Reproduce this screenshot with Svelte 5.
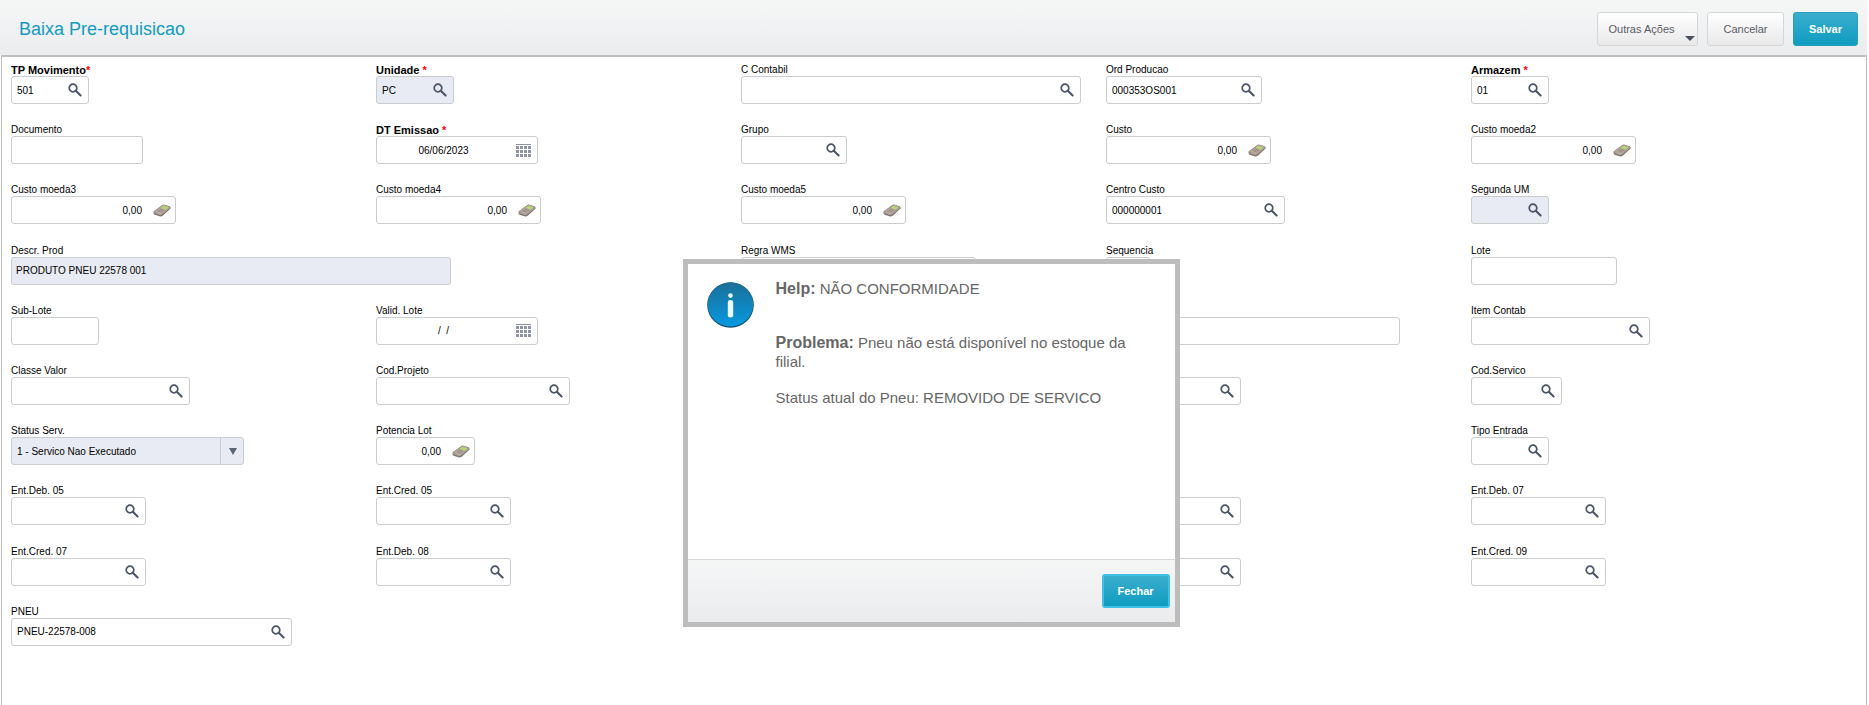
<script>
  // width is the box width in px, col/row are 1-based grid positions
  const fields = [
    { id: 'tp', label: 'TP Movimento', required: true, tight: true, row: 1, col: 1, width: 78, value: '501', icon: 'search' },
    { id: 'unidade', label: 'Unidade', required: true, row: 1, col: 2, width: 78, value: 'PC', icon: 'search', readonly: true },
    { id: 'ccontabil', label: 'C Contabil', row: 1, col: 3, width: 340, icon: 'search' },
    { id: 'op', label: 'Ord Producao', row: 1, col: 4, width: 156, value: '000353OS001', icon: 'search' },
    { id: 'armazem', label: 'Armazem', required: true, row: 1, col: 5, width: 78, value: '01', icon: 'search' },

    { id: 'documento', label: 'Documento', row: 2, col: 1, width: 132 },
    { id: 'emissao', label: 'DT Emissao', required: true, row: 2, col: 2, width: 162, value: '06/06/2023', icon: 'calendar' },
    { id: 'grupo', label: 'Grupo', row: 2, col: 3, width: 106, icon: 'search' },
    { id: 'custo', label: 'Custo', row: 2, col: 4, width: 165, value: '0,00', icon: 'calc' },
    { id: 'custo2', label: 'Custo moeda2', row: 2, col: 5, width: 165, value: '0,00', icon: 'calc' },

    { id: 'custo3', label: 'Custo moeda3', row: 3, col: 1, width: 165, value: '0,00', icon: 'calc' },
    { id: 'custo4', label: 'Custo moeda4', row: 3, col: 2, width: 165, value: '0,00', icon: 'calc' },
    { id: 'custo5', label: 'Custo moeda5', row: 3, col: 3, width: 165, value: '0,00', icon: 'calc' },
    { id: 'cc', label: 'Centro Custo', row: 3, col: 4, width: 179, value: '000000001', icon: 'search' },
    { id: 'segum', label: 'Segunda UM', row: 3, col: 5, width: 78, icon: 'search', readonly: true },

    { id: 'descr', label: 'Descr. Prod', row: 4, col: 1, width: 440, value: 'PRODUTO PNEU 22578 001', readonly: true },
    { id: 'wms', label: 'Regra WMS', row: 4, col: 3, width: 235 },
    { id: 'sequencia', label: 'Sequencia', row: 4, col: 4, width: 44 },
    { id: 'lote', label: 'Lote', row: 4, col: 5, width: 146 },

    { id: 'sublote', label: 'Sub-Lote', row: 5, col: 1, width: 88 },
    { id: 'valid', label: 'Valid. Lote', row: 5, col: 2, width: 162, value: '/  /', icon: 'calendar' },
    { id: 'obs', row: 5, col: 4, width: 294 },
    { id: 'item', label: 'Item Contab', row: 5, col: 5, width: 179, icon: 'search' },

    { id: 'classe', label: 'Classe Valor', row: 6, col: 1, width: 179, icon: 'search' },
    { id: 'projeto', label: 'Cod.Projeto', row: 6, col: 2, width: 194, icon: 'search' },
    { id: 'tarefa', row: 6, col: 4, width: 135, icon: 'search' },
    { id: 'servico', label: 'Cod.Servico', row: 6, col: 5, width: 91, icon: 'search' },

    { id: 'status', label: 'Status Serv.', row: 7, col: 1, width: 233, options: ['1 - Servico Nao Executado'] },
    { id: 'potencia', label: 'Potencia Lot', row: 7, col: 2, width: 99, value: '0,00', icon: 'calc' },
    { id: 'entrada', label: 'Tipo Entrada', row: 7, col: 5, width: 78, icon: 'search' },

    { id: 'deb05', label: 'Ent.Deb. 05', row: 8, col: 1, width: 135, icon: 'search' },
    { id: 'cred05', label: 'Ent.Cred. 05', row: 8, col: 2, width: 135, icon: 'search' },
    { id: 'cred06', row: 8, col: 4, width: 135, icon: 'search' },
    { id: 'deb07', label: 'Ent.Deb. 07', row: 8, col: 5, width: 135, icon: 'search' },

    { id: 'cred07', label: 'Ent.Cred. 07', row: 9, col: 1, width: 135, icon: 'search' },
    { id: 'deb08', label: 'Ent.Deb. 08', row: 9, col: 2, width: 135, icon: 'search' },
    { id: 'deb09', row: 9, col: 4, width: 135, icon: 'search' },
    { id: 'cred09', label: 'Ent.Cred. 09', row: 9, col: 5, width: 135, icon: 'search' },

    { id: 'pneu', label: 'PNEU', row: 10, col: 1, width: 281, value: 'PNEU-22578-008', icon: 'search' },
  ];

  let helpOpen = $state(true);
</script>

{#snippet icon(name)}
  {#if name === 'search'}
    <svg width="14" height="14" viewBox="0 0 14 14" fill="none" stroke="#4a5468">
      <circle cx="5" cy="5" r="3.8" stroke-width="1.7" />
      <path d="M7.8 7.8 L12.6 12.4" stroke-width="2.1" stroke-linecap="round" />
    </svg>
  {:else if name === 'calendar'}
    <svg width="15" height="13" viewBox="0 0 15 13" fill="#8d93a3">
      <rect width="15" height="1" />
      {#each [2, 6, 10] as y}
        {#each [0, 4, 8, 12] as x}
          <rect {x} {y} width="3" height="3" />
        {/each}
      {/each}
    </svg>
  {:else}
    <svg width="18" height="13" viewBox="0 0 18 13">
      <path d="M0.5 8 Q0.6 7.4 1.4 6.8 L9 1.2 Q10.3 0.3 11.6 0.7 L16.6 2.3 Q17.9 3 17.6 4.6 L10 11.4 Q8.4 12.8 6.4 12.3 L1.6 10.7 Q0.4 10 0.5 8 Z" fill="#7f746d" />
      <path d="M0.9 7.6 L9.4 1.4 Q10.4 0.7 11.6 1 L16.8 2.7 L9 9.4 Q7.8 10.4 6.4 9.9 Z" fill="#b5a79c" />
      <path d="M10.2 1.9 L15.2 3.4 L12.8 5.5 L7.9 3.8 Z" fill="#b2dc6c" />
      <path d="M6.4 5 L11 6.6 M4.6 6.4 L9.2 8" stroke="#95877d" stroke-width="0.9" />
      <path d="M1.4 8.6 L6.6 10.4 Q8.2 10.7 9.4 9.7 L17 3.4" fill="none" stroke="#d8d0c9" stroke-width="0.6" />
    </svg>
  {/if}
{/snippet}

<div class="app">
  <header>
    <h1>Baixa Pre-requisicao</h1>
    <div class="actions">
      <button class="btn menu">Outras Ações</button>
      <button class="btn cancel">Cancelar</button>
      <button class="btn primary save">Salvar</button>
    </div>
  </header>

  <form class="panel">
    {#each fields as f (f.id)}
      <div class="field" style="grid-row: {f.row}; grid-column: {f.col}">
        <label for={f.id} class:required={f.required}>
          {f.label ?? ''}{#if f.required}{f.tight ? '' : ' '}<span class="star">*</span>{/if}
        </label>
        {#if f.options}
          <div class="box readonly" style="width: {f.width}px">
            <select id={f.id}>
              {#each f.options as option}
                <option>{option}</option>
              {/each}
            </select>
            <span class="arrow"></span>
          </div>
        {:else}
          <div class="box {f.icon ?? 'plain'}" class:readonly={f.readonly} style="width: {f.width}px">
            <input id={f.id} type="text" value={f.value ?? ''} readonly={f.readonly} aria-label={f.label ?? f.id} />
            {#if f.icon}
              <button type="button" class="lookup" aria-label={f.label ?? f.id}>{@render icon(f.icon)}</button>
            {/if}
          </div>
        {/if}
      </div>
    {/each}
  </form>
</div>

{#if helpOpen}
  <div class="dialog" role="dialog" aria-labelledby="help-title">
    <div class="dialog-body">
      <svg class="info" width="48" height="47" viewBox="0 0 48 47">
        <defs>
          <linearGradient id="infoFill" x1="0" y1="0" x2="0" y2="1">
            <stop offset="0" stop-color="#1b6f98" />
            <stop offset="1" stop-color="#0699e0" />
          </linearGradient>
        </defs>
        <ellipse cx="23.5" cy="23" rx="23.3" ry="22.8" fill="#154a68" />
        <ellipse cx="23.5" cy="22.5" rx="22.7" ry="22" fill="url(#infoFill)" />
        <circle cx="23.5" cy="13.6" r="2.3" fill="#e9fbff" />
        <rect x="20.8" y="18" width="5.4" height="17.6" rx="2.4" fill="#e9fbff" />
      </svg>
      <div class="message">
        <p id="help-title" class="title"><strong>Help:</strong> NÃO CONFORMIDADE</p>
        <p><strong>Problema:</strong> Pneu não está disponível no estoque da filial.</p>
        <p>Status atual do Pneu: REMOVIDO DE SERVICO</p>
      </div>
    </div>
    <div class="dialog-footer">
      <button class="btn primary close" onclick={() => (helpOpen = false)}>Fechar</button>
    </div>
  </div>
{/if}

<style>
  :global(*) {
    box-sizing: border-box;
  }

  :global(body) {
    background: #ffffff;
    color: #000000;
    font-family: 'Liberation Sans', Arial, sans-serif;
    font-size: 10px;
  }

  .app {
    display: flex;
    flex-direction: column;
    min-height: 100vh;
    margin-right: 2px;
  }

  header {
    display: flex;
    align-items: center;
    justify-content: space-between;
    height: 55px;
    padding: 3px 9px 0 19px;
    background: linear-gradient(#f5f7f7, #ebecee);
  }

  h1 {
    margin: 0;
    color: #129bc0;
    font-size: 18px;
    font-weight: normal;
  }

  .actions {
    display: flex;
    gap: 9px;
  }

  .btn {
    position: relative;
    height: 34px;
    padding: 0;
    border: 1px solid #d4d6d8;
    border-radius: 3px;
    background: linear-gradient(#ffffff, #e9e9ea);
    color: #5a5c66;
    font-family: inherit;
    font-size: 11px;
    cursor: pointer;
  }

  .menu {
    width: 101px;
    padding-right: 12px;
  }

  .menu::after {
    content: '';
    position: absolute;
    right: 2px;
    bottom: 4px;
    border: 5px solid transparent;
    border-top-color: #4a5060;
    border-bottom-width: 0;
  }

  .cancel {
    width: 77px;
  }

  .primary {
    border-color: #2a9dbd;
    background: linear-gradient(#3aaecd, #0f9cc0);
    color: #ffffff;
    font-weight: bold;
  }

  .save {
    width: 65px;
  }

  .panel {
    flex: 1;
    display: grid;
    grid-template-columns: repeat(5, minmax(0, 1fr));
    grid-template-rows: repeat(10, minmax(60px, 1fr));
    padding: 6px 30px 40px 9px;
    border: solid #bfbfbf;
    border-width: 2px 1px 0 1px;
    margin-left: 1px;
  }

  label {
    display: block;
    height: 13px;
    line-height: 14px;
    white-space: nowrap;
  }

  .required {
    font-size: 11px;
    font-weight: bold;
  }

  .star {
    color: #ff0000;
  }

  .box {
    display: flex;
    align-items: center;
    height: 28px;
    border: 1px solid #c9cdcd;
    border-radius: 3px;
    background: #ffffff;
  }

  .readonly {
    background: #e8ebf3;
  }

  input,
  select {
    flex: 1;
    min-width: 0;
    height: 26px;
    padding: 0 0 0 5px;
    border: none;
    outline: none;
    background: transparent;
    color: #000000;
    font-family: inherit;
    font-size: 10px;
  }

  .plain input {
    padding-left: 4px;
  }

  select {
    appearance: none;
  }

  .calendar input {
    padding: 0 6px 0 0;
    text-align: center;
  }

  .calc input {
    padding-right: 11px;
    text-align: right;
  }

  .lookup {
    display: flex;
    padding: 0;
    margin-right: 6px;
    border: none;
    background: none;
    cursor: pointer;
  }

  .calc .lookup {
    margin-right: 4px;
  }

  .arrow {
    display: flex;
    align-items: center;
    justify-content: center;
    width: 23px;
    height: 26px;
    padding-left: 2px;
    border-left: 1px solid #c9cdcd;
  }

  .arrow::before {
    content: '';
    border: 4px solid transparent;
    border-top: 7px solid #5c6475;
    border-bottom-width: 0;
  }

  .dialog {
    position: absolute;
    top: 259px;
    left: calc(50% - 252px);
    display: flex;
    flex-direction: column;
    width: 497px;
    min-height: 368px;
    border: 5px solid #bdbdbd;
    background: #ffffff;
    color: #666666;
    font-size: 15px;
    line-height: 19px;
  }

  .dialog-body {
    flex: 1;
    display: flex;
    gap: 21px;
    padding: 15px 30px 16px 19px;
  }

  .info {
    flex: none;
    margin-top: 3px;
  }

  p {
    margin: 0 0 17px;
  }

  .title {
    margin-bottom: 35px;
  }

  strong {
    font-size: 16px;
    line-height: 16px;
  }

  .dialog-footer {
    display: flex;
    justify-content: flex-end;
    padding: 14px 5px;
    border-top: 1px solid #d6d8d8;
    background: linear-gradient(#f5f6f6, #ebecee);
  }

  .close {
    width: 68px;
    border: 2px solid #3fc0e4;
  }
</style>
